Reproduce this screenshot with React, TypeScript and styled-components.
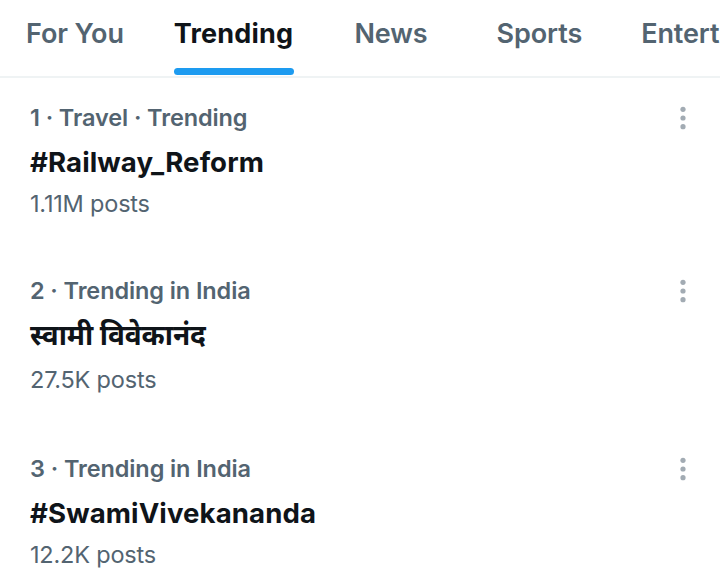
import styled, { createGlobalStyle } from "styled-components";

const GlobalStyle = createGlobalStyle`
  *, *::before, *::after { box-sizing: border-box; }
  html, body { margin: 0; padding: 0; background: #ffffff; }
  body {
    font-family: Inter, "Noto Sans", "Noto Sans Devanagari", "DejaVu Sans", sans-serif;
    color: #0f1419;
    overflow: hidden;
  }
`;

const Page = styled.div`
  width: 720px;
  height: 576px;
  overflow: hidden;
  background: #fff;
`;

const TabBar = styled.nav`
  display: flex;
  align-items: stretch;
  height: 78px;
  border-bottom: 2px solid #eff3f4;
  white-space: nowrap;
  overflow: hidden;
`;

const Tab = styled.div<{ $active?: boolean; $pad: number }>`
  position: relative;
  display: flex;
  align-items: flex-start;
  padding: 17px 0 0 ${({ $pad }) => $pad}px;
  font-size: 27px;
  font-weight: ${({ $active }) => ($active ? 700 : 600)};
  letter-spacing: ${({ $active }) => ($active ? "0.2px" : "-0.1px")};
  color: ${({ $active }) => ($active ? "#0f1419" : "#536471")};
  flex-shrink: 0;
`;

const TabLabel = styled.span<{ $active?: boolean }>`
  position: relative;
  display: inline-block;
  height: 100%;

  &::after {
    content: "";
    display: ${({ $active }) => ($active ? "block" : "none")};
    position: absolute;
    left: 0;
    right: -1px;
    bottom: 1px;
    height: 7px;
    border-radius: 4px;
    background: #1d9bf0;
  }
`;

const List = styled.div`
  display: flex;
  flex-direction: column;
`;

const Row = styled.div<{ $height: number }>`
  display: flex;
  justify-content: space-between;
  align-items: flex-start;
  height: ${({ $height }) => $height}px;
  padding: 25px 33px 0 30px;
`;

const Info = styled.div`
  display: flex;
  flex-direction: column;
`;

const Meta = styled.div`
  font-size: 23.5px;
  font-weight: 600;
  color: #536471;
  line-height: 30px;
  letter-spacing: -0.1px;
`;

const Title = styled.div<{ $script?: boolean }>`
  margin-top: 12px;
  font-size: ${({ $script }) => ($script ? "28px" : "27.6px")};
  font-weight: 700;
  color: #0f1419;
  line-height: 34px;
  height: ${({ $script }) => ($script ? "37px" : "34px")};
  letter-spacing: ${({ $script }) => ($script ? "-0.1px" : "0.1px")};
`;

const Count = styled.div`
  margin-top: 10px;
  font-size: 23.5px;
  font-weight: 400;
  color: #536471;
  line-height: 30px;
  letter-spacing: -0.2px;
`;

const MoreButton = styled.div`
  display: flex;
  padding-top: 2px;
`;

const MoreIcon = () => (
  <svg width="8" height="26" viewBox="0 0 8 26">
    <circle cx="4" cy="4.3" r="2.6" fill="#a2abb3" />
    <circle cx="4" cy="13" r="2.6" fill="#a2abb3" />
    <circle cx="4" cy="21.7" r="2.6" fill="#a2abb3" />
  </svg>
);

const tabs = [
  { label: "For You", pad: 26 },
  { label: "Trending", pad: 50, active: true },
  { label: "News", pad: 61 },
  { label: "Sports", pad: 69 },
  { label: "Entertainment", pad: 59 },
];

const trends = [
  { meta: "1 · Travel · Trending", title: "#Railway_Reform", count: "1.11M posts", h: 173 },
  { meta: "2 · Trending in India", title: "स्वामी विवेकानंद", count: "27.5K posts", h: 178, script: true },
  { meta: "3 · Trending in India", title: "#SwamiVivekananda", count: "12.2K posts", h: 150 },
];

export default function App() {
  return (
    <Page>
      <GlobalStyle />
      <TabBar>
        {tabs.map((t) => (
          <Tab key={t.label} $active={t.active} $pad={t.pad}>
            <TabLabel $active={t.active}>{t.label}</TabLabel>
          </Tab>
        ))}
      </TabBar>
      <List>
        {trends.map((t) => (
          <Row key={t.meta} $height={t.h}>
            <Info>
              <Meta>{t.meta}</Meta>
              <Title $script={t.script}>{t.title}</Title>
              <Count>{t.count}</Count>
            </Info>
            <MoreButton>
              <MoreIcon />
            </MoreButton>
          </Row>
        ))}
      </List>
    </Page>
  );
}
